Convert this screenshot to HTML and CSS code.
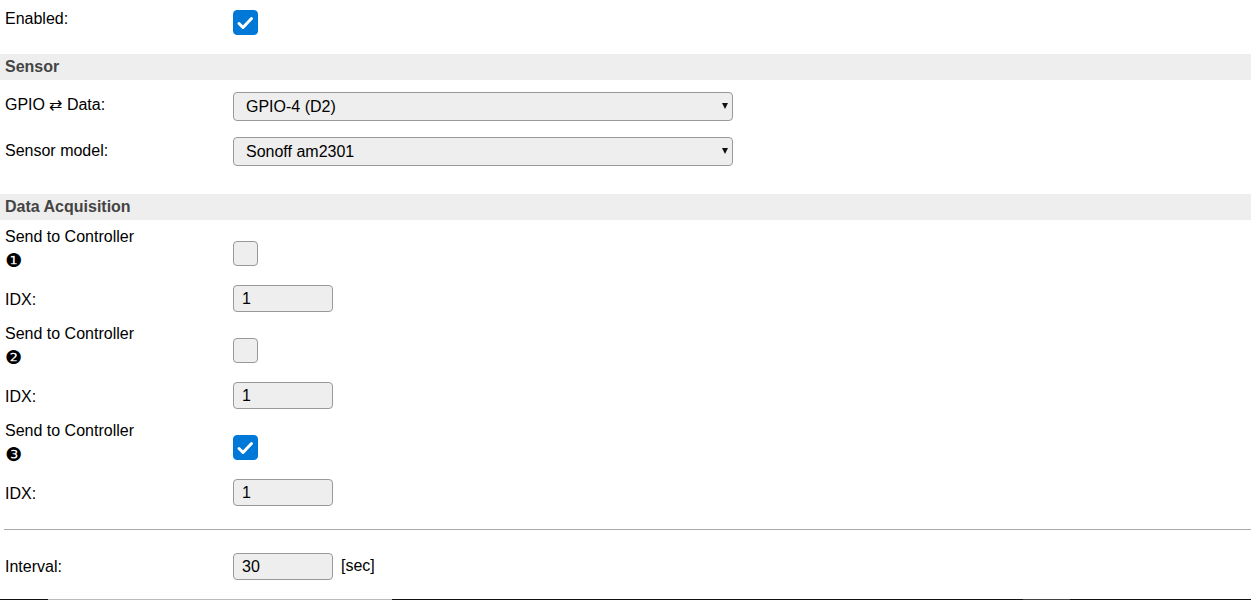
FILE: index.html
```html
<!DOCTYPE html>
<html>
<head>
<meta charset="utf-8">
<link rel="stylesheet" href="styles.css">
</head>
<body>
<div class="form">
  <div class="row r-enabled">
    <div class="lbl">Enabled:</div>
    <span class="cb on"><svg viewBox="0 0 25 25" width="25" height="25"><path d="M6 13.5 L10 17.5 L18.5 8.5" fill="none" stroke="#fff" stroke-width="3" stroke-linecap="round" stroke-linejoin="round"/></svg></span>
  </div>

  <div class="sec">Sensor</div>
  <div class="sensor">
    <div class="row r-sel">
      <div class="lbl">GPIO &#8644; Data:</div>
      <div class="sel"><select><option>GPIO-4 (D2)</option></select></div>
    </div>
    <div class="row r-sel r-model">
      <div class="lbl">Sensor model:</div>
      <div class="sel"><select><option>Sonoff am2301</option></select></div>
    </div>
  </div>

  <div class="sec">Data Acquisition</div>
  <div class="row r-send">
    <div class="lbl">Send to Controller<span class="num">&#10102;</span></div>
    <span class="cb"></span>
  </div>
  <div class="row r-idx">
    <div class="lbl">IDX:</div>
    <input class="txt" type="text" value="1">
  </div>
  <div class="row r-send">
    <div class="lbl">Send to Controller<span class="num">&#10103;</span></div>
    <span class="cb"></span>
  </div>
  <div class="row r-idx">
    <div class="lbl">IDX:</div>
    <input class="txt" type="text" value="1">
  </div>
  <div class="row r-send">
    <div class="lbl">Send to Controller<span class="num">&#10104;</span></div>
    <span class="cb on"><svg viewBox="0 0 25 25" width="25" height="25"><path d="M6 13.5 L10 17.5 L18.5 8.5" fill="none" stroke="#fff" stroke-width="3" stroke-linecap="round" stroke-linejoin="round"/></svg></span>
  </div>
  <div class="row r-idx">
    <div class="lbl">IDX:</div>
    <input class="txt" type="text" value="1">
  </div>

  <hr class="sep">

  <div class="row r-int">
    <div class="lbl">Interval:</div>
    <input class="txt" type="text" value="30">
    <span class="unit">[sec]</span>
  </div>
</div>
<div class="foot"></div>
</body>
</html>
```
FILE: styles.css
```css
* { box-sizing: border-box; }
html, body { margin: 0; padding: 0; background: #fff; }
body {
  font-family: "Liberation Sans", Arial, sans-serif;
  font-size: 16px;
  color: #000;
  line-height: normal;
}
.row { display: flex; align-items: flex-start; }
.lbl { width: 233px; flex: none; padding-left: 5px; }

.r-enabled { height: 54px; }
.r-enabled .lbl { padding-top: 10px; }
.r-enabled .cb { margin-top: 10px; }

.sec {
  height: 26px;
  background: #eee;
  color: #444;
  font-weight: bold;
  padding-left: 5px;
  display: flex;
  align-items: center;
}

.sensor { padding: 4px 0 20px; }
.r-sel { height: 45px; }
.r-sel .lbl { padding-top: 11px; }
.r-model .lbl { padding-top: 13px; }
.sel { margin-top: 8px; position: relative; width: 500px; height: 29px; }
.sel select {
  -webkit-appearance: none;
  appearance: none;
  width: 100%;
  height: 100%;
  margin: 0;
  background: #eee;
  border: 1px solid #999;
  border-radius: 4px;
  font: inherit;
  color: #000;
  padding: 0 0 0 12px;
}
.sel::after {
  content: "";
  position: absolute;
  right: 5px;
  top: 11px;
  border-left: 3.5px solid transparent;
  border-right: 3.5px solid transparent;
  border-top: 6px solid #111;
}

.cb {
  display: block;
  width: 25px;
  height: 25px;
  border: 1px solid #999;
  border-radius: 4px;
  background: #eee;
  overflow: hidden;
}
.cb svg { display: block; margin: -1px; }
.cb.on { background: #0078d7; border-color: #0078d7; }

.r-send { height: 57px; }
.r-send .lbl { padding-top: 8px; }
.r-send .cb { margin-top: 21px; }
.num {
  display: block;
  font-family: "DejaVu Sans", sans-serif;
  font-size: 19px;
  line-height: 18px;
  height: 18px;
  margin-top: 5px;
}

.r-idx { height: 40px; }
.r-idx .lbl { padding-top: 14px; }
.txt {
  width: 100px;
  height: 27px;
  margin: 8px 0 0;
  background: #eee;
  border: 1px solid #999;
  border-radius: 4px;
  font: inherit;
  color: #000;
  padding: 0 0 0 8px;
}

.sep {
  margin: 18px 0 0 4px;
  border: 0;
  border-top: 1px solid #aaa;
  height: 0;
}

.r-int { height: 69px; }
.r-int .lbl { padding-top: 28px; }
.r-int .txt { margin-top: 23px; }
.unit { margin-left: 8px; padding-top: 27px; }

.foot {
  height: 20px;
  background: linear-gradient(to right, #111 0, #111 48px, #bbb 48px, #bbb 392px, #111 392px, #111 1023px, #444 1023px, #444 1070px, #111 1070px);
}
```
